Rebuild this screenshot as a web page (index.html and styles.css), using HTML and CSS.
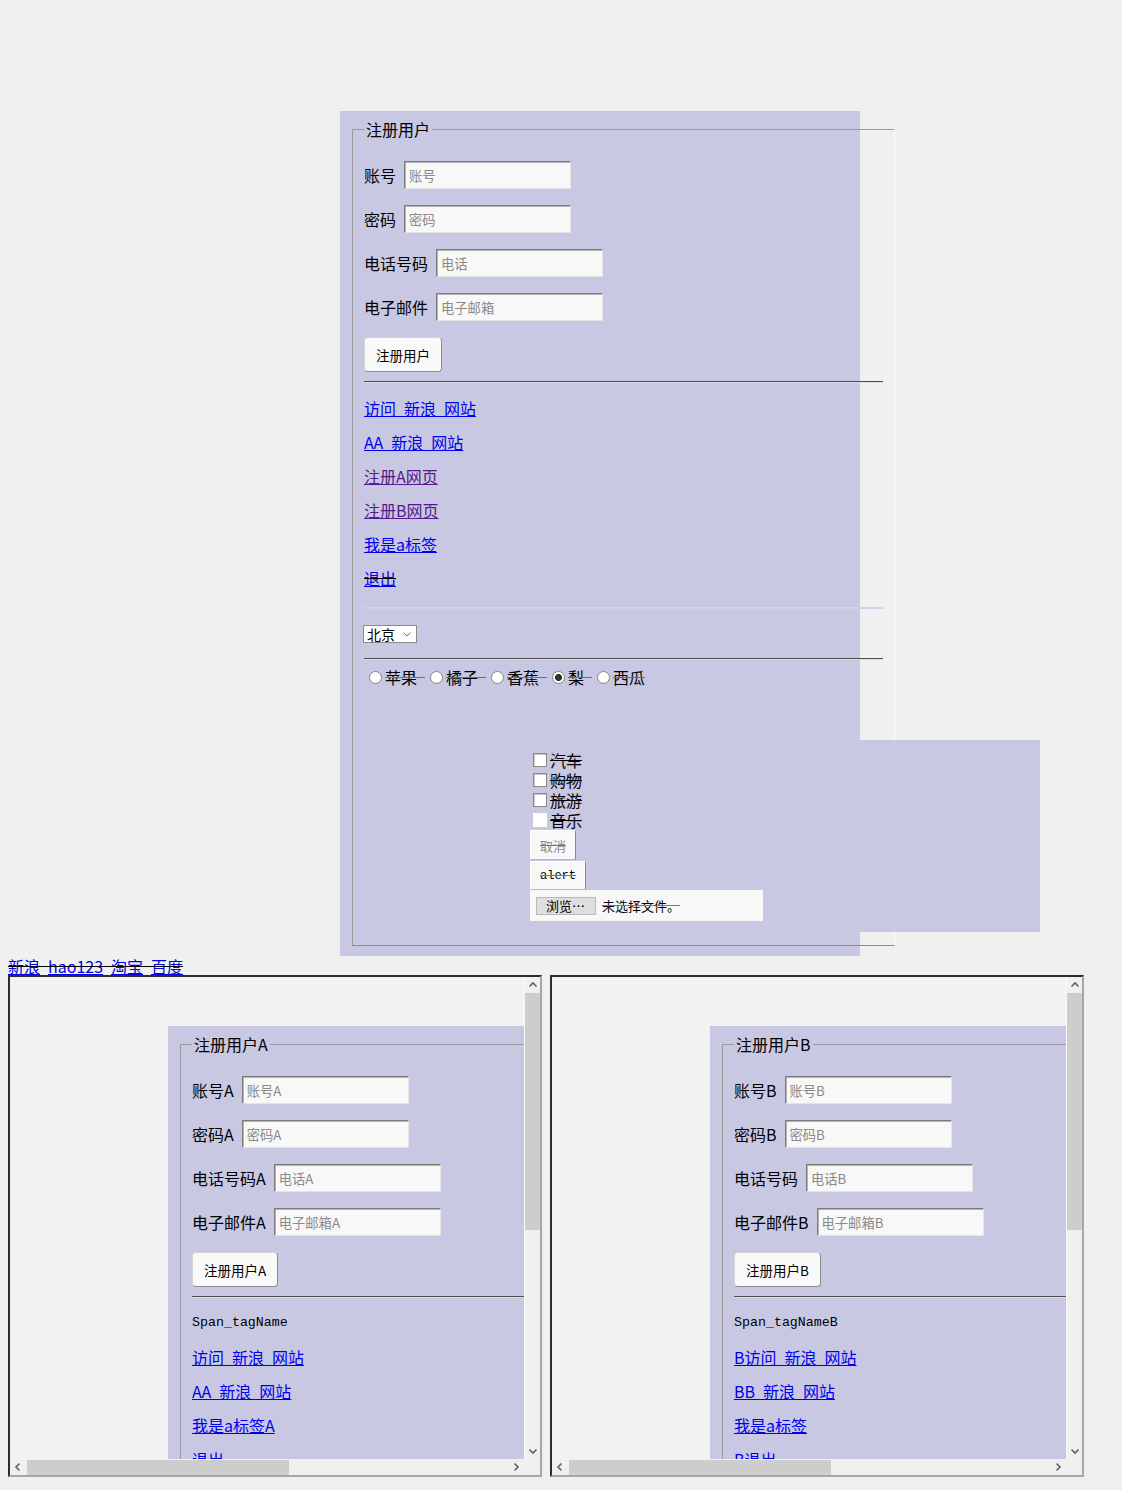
FILE: index.html
```html
<!DOCTYPE html>
<html lang="zh-CN">
<head>
<meta charset="utf-8">
<title>注册用户</title>
<link rel="stylesheet" href="styles.css">
</head>
<body>
<div class="sheet">
  <fieldset class="reg">
    <legend>注册用户</legend>
    <p class="row"><label class="lbl">账号</label><input class="field" placeholder="账号"></p>
    <p class="row"><label class="lbl">密码</label><input class="field" type="password" placeholder="密码"></p>
    <p class="row"><label class="lbl">电话号码</label><input class="field" placeholder="电话"></p>
    <p class="row"><label class="lbl">电子邮件</label><input class="field" placeholder="电子邮箱"></p>
    <div class="btnrow"><button class="submit" type="button">注册用户</button></div>
    <hr class="rule">
    <p class="lnk"><a href="#">访问 新浪 网站</a></p>
    <p class="lnk"><a href="#">AA 新浪 网站</a></p>
    <p class="lnk"><a class="visited" href="#">注册A网页</a></p>
    <p class="lnk"><a class="visited" href="#">注册B网页</a></p>
    <p class="lnk"><a href="#">我是a标签</a></p>
    <p class="lnk"><span class="strike"><a href="#">退出</a></span></p>
    <hr class="rule light">
    <p class="selrow"><span class="select">北京<svg class="chev" viewBox="0 0 8 5"><path d="M0.5 0.5 L4 4 L7.5 0.5"/></svg></span></p>
    <hr class="rule">
    <div class="radios">
      <span class="radio"></span><span class="opt">苹果&nbsp;</span>
      <span class="radio"></span><span class="opt">橘子&nbsp;</span>
      <span class="radio"></span><span class="opt">香蕉&nbsp;</span>
      <span class="radio checked"></span><span class="opt">梨&nbsp;</span>
      <span class="radio"></span><span class="opt">西瓜</span>
    </div>
    <div class="hobbies">
      <div class="cbrow"><span class="cb"></span><span class="hob">汽车</span></div>
      <div class="cbrow"><span class="cb"></span><span class="hob">购物</span></div>
      <div class="cbrow"><span class="cb"></span><span class="hob">旅游</span></div>
      <div class="cbrow"><span class="cb blank"></span><span class="hob">音乐</span></div>
      <button class="flatbtn cancel" type="button">取消</button>
      <button class="flatbtn alert" type="button">alert</button>
      <div class="file"><span class="browse">浏览…</span><span class="nofile">未选择文件。</span></div>
    </div>
  </fieldset>
</div>

<div class="sites"><a href="#">新浪</a> <a href="#">hao123</a> <a href="#">淘宝</a> <a href="#">百度</a></div>

<div class="frames">
  <div class="frame">
    <div class="view">
      <div class="sheet mini">
        <fieldset class="reg">
          <legend>注册用户A</legend>
          <p class="row"><label class="lbl">账号A</label><input class="field" placeholder="账号A"></p>
          <p class="row"><label class="lbl">密码A</label><input class="field" type="password" placeholder="密码A"></p>
          <p class="row"><label class="lbl">电话号码A</label><input class="field" placeholder="电话A"></p>
          <p class="row"><label class="lbl">电子邮件A</label><input class="field" placeholder="电子邮箱A"></p>
          <div class="btnrow"><button class="submit" type="button">注册用户A</button></div>
          <hr class="rule">
          <p class="lnk plain">Span_tagName</p>
          <p class="lnk"><a href="#">访问 新浪 网站</a></p>
          <p class="lnk"><a href="#">AA 新浪 网站</a></p>
          <p class="lnk"><a href="#">我是a标签A</a></p>
          <p class="lnk"><span class="strike"><a href="#">退出</a></span></p>
        </fieldset>
      </div>
    </div>
    <div class="vbar">
      <span class="arrow"><svg viewBox="0 0 16 16"><path d="M4.5 9.5 L8 6 L11.5 9.5"/></svg></span>
      <span class="vtrack"><span class="vthumb"></span></span>
      <span class="arrow"><svg viewBox="0 0 16 16"><path d="M4.5 6.5 L8 10 L11.5 6.5"/></svg></span>
    </div>
    <div class="hbar">
      <span class="arrow"><svg viewBox="0 0 16 16"><path d="M9.5 4.5 L6 8 L9.5 11.5"/></svg></span>
      <span class="htrack"><span class="hthumb"></span></span>
      <span class="arrow"><svg viewBox="0 0 16 16"><path d="M6.5 4.5 L10 8 L6.5 11.5"/></svg></span>
    </div>
    <div class="corner"></div>
  </div>

  <div class="frame">
    <div class="view">
      <div class="sheet mini">
        <fieldset class="reg">
          <legend>注册用户B</legend>
          <p class="row"><label class="lbl">账号B</label><input class="field" placeholder="账号B"></p>
          <p class="row"><label class="lbl">密码B</label><input class="field" type="password" placeholder="密码B"></p>
          <p class="row"><label class="lbl">电话号码</label><input class="field" placeholder="电话B"></p>
          <p class="row"><label class="lbl">电子邮件B</label><input class="field" placeholder="电子邮箱B"></p>
          <div class="btnrow"><button class="submit" type="button">注册用户B</button></div>
          <hr class="rule">
          <p class="lnk plain">Span_tagNameB</p>
          <p class="lnk"><a href="#">B访问 新浪 网站</a></p>
          <p class="lnk"><a href="#">BB 新浪 网站</a></p>
          <p class="lnk"><a href="#">我是a标签</a></p>
          <p class="lnk"><a href="#">B退出</a></p>
        </fieldset>
      </div>
    </div>
    <div class="vbar">
      <span class="arrow"><svg viewBox="0 0 16 16"><path d="M4.5 9.5 L8 6 L11.5 9.5"/></svg></span>
      <span class="vtrack"><span class="vthumb"></span></span>
      <span class="arrow"><svg viewBox="0 0 16 16"><path d="M4.5 6.5 L8 10 L11.5 6.5"/></svg></span>
    </div>
    <div class="hbar">
      <span class="arrow"><svg viewBox="0 0 16 16"><path d="M9.5 4.5 L6 8 L9.5 11.5"/></svg></span>
      <span class="htrack"><span class="hthumb"></span></span>
      <span class="arrow"><svg viewBox="0 0 16 16"><path d="M6.5 4.5 L10 8 L6.5 11.5"/></svg></span>
    </div>
    <div class="corner"></div>
  </div>
</div>
</body>
</html>
```

FILE: styles.css
```css
html, body {
  margin: 0;
}

body {
  padding: 8px;
  background: #f0f0f0;
  color: #000;
  font-family: "Noto Sans CJK SC", "Noto Sans", sans-serif;
  font-size: 16px;
  line-height: 18px;
  word-spacing: 4.4px;
}

/* ---------- purple sheet ---------- */
.sheet {
  margin: 103px 0 0 332px;
  width: 500px;
  height: 825px;
  padding: 10px;
  background: #c8c8e3;
}

.reg {
  margin: 0 2px;
  padding: 8px 11px 13px;
  width: 519px;
  min-width: 0;
  border: 1px solid;
  border-color: #9a9a9a #fdfdfd #8c8c8c #9a9a9a;
}

.reg legend {
  padding: 0 2px;
  font-size: 16px;
  line-height: 16px;
}

.row {
  display: flex;
  align-items: center;
  gap: 8px;
  height: 28px;
  margin: 16px 0;
}

.field {
  width: 167px;
  height: 28px;
  box-sizing: border-box;
  margin: 0;
  padding: 0 4px;
  border: 1px solid;
  border-color: #7c7c7c #e4e4e4 #e4e4e4 #7c7c7c;
  box-shadow: inset 1px 1px 0 #b4b4b4;
  background: #f8f8f8;
  font-family: "Noto Sans CJK SC", sans-serif;
  font-size: 13.3px;
  word-spacing: 0;
}

.field::placeholder {
  color: #8a8a8a;
}

.btnrow {
  height: 36px;
}

.submit {
  height: 35px;
  margin: 0;
  padding: 0 11px;
  border: 1px solid;
  border-color: #d4d4d4 #8e8e8e #8e8e8e #d4d4d4;
  border-radius: 4px;
  background: #f9f9f9;
  color: #000;
  font-family: "Noto Sans CJK SC", sans-serif;
  font-size: 13.5px;
  word-spacing: 0;
}

.rule {
  height: 0;
  margin: 8px 0;
  border: 0;
  border-top: 1px solid #4e4e4e;
  border-bottom: 1px solid #dcdce8;
}

.rule.light {
  margin: 20px 0 15px;
  border-top-color: #d6d6d6;
  border-bottom-color: #cfcfe6;
}

.lnk {
  margin: 16px 0;
  height: 18px;
}

.lnk a {
  color: #0000ee;
  text-decoration: underline;
}

.lnk a.visited {
  color: #551a8b;
}

.strike {
  text-decoration: line-through #000;
}

.plain {
  color: #000;
  font-family: "Liberation Mono", monospace;
  font-size: 13.3px;
  word-spacing: 0;
}

/* ---------- select ---------- */
.selrow {
  margin: 15px 0 16px;
  height: 18px;
}

.select {
  display: inline-flex;
  align-items: center;
  width: 54px;
  height: 18px;
  box-sizing: border-box;
  margin-left: -1px;
  padding-left: 3px;
  border: 1px solid #8a8a8a;
  background: #fff;
  font-size: 14px;
  line-height: 16px;
}

.chev {
  width: 8px;
  height: 5px;
  margin: 0 5px 0 auto;
  fill: none;
  stroke: #707070;
  stroke-width: 1;
}

/* ---------- radios ---------- */
.radios {
  display: flex;
  align-items: center;
  height: 18px;
}

.radio {
  width: 13px;
  height: 13px;
  box-sizing: border-box;
  margin: 0 3px 0 5px;
  border: 1px solid #868686;
  border-radius: 50%;
  background: #fff;
}

.radio.checked {
  background: radial-gradient(circle, #333 0 3.2px, #fff 3.8px);
}

.opt {
  text-decoration: line-through #6e6e6e;
}

/* ---------- hobbies block ---------- */
.hobbies {
  margin: 54px 0 0 166px;
  width: 510px;
  padding: 10px 0 11px;
  background: #c8c8e3;
}

.cbrow {
  display: flex;
  align-items: center;
  height: 20px;
  line-height: 16px;
}

.cb {
  width: 14px;
  height: 14px;
  box-sizing: border-box;
  margin: 0 3px 0 3px;
  border: 1px solid #888;
  box-shadow: inset 1px 1px 0 #c8c8c8;
  background: #fff;
}

.cb.blank {
  border-color: #fff;
  box-shadow: none;
}

.hob {
  text-decoration: line-through #000;
}

.flatbtn {
  display: block;
  margin: 0;
  padding: 0 9px;
  border: 1px solid;
  border-color: #fff #8c8c8c #b8b8b8 #fff;
  background: #f8f8f8;
  text-decoration: line-through #7a7a7a;
}

.cancel {
  height: 30px;
  color: #8c8c8c;
  font-family: "Noto Sans CJK SC", sans-serif;
  font-size: 13px;
}

.alert {
  height: 29px;
  margin-top: 1px;
  color: #000;
  font-family: "Liberation Mono", monospace;
  font-size: 12px;
}

.file {
  display: flex;
  align-items: center;
  gap: 6px;
  width: 233px;
  height: 31px;
  box-sizing: border-box;
  padding-left: 6px;
  background: #f8f8f8;
  font-size: 13px;
  line-height: 16px;
  word-spacing: 0;
}

.browse {
  width: 60px;
  height: 18px;
  box-sizing: border-box;
  padding-left: 9px;
  border: 1px solid #b9b9b9;
  background: #dedede;
  line-height: 16px;
}

.nofile {
  text-decoration: line-through #7a7a7a;
}

/* ---------- site links ---------- */
.sites {
  margin-top: 1px;
  height: 18px;
  text-decoration: line-through #000;
}

.sites a {
  color: #0000ee;
  text-decoration: underline;
}

/* ---------- frames ---------- */
.frames {
  display: flex;
  gap: 8px;
}

.frame {
  width: 534px;
  height: 502px;
  box-sizing: border-box;
  border: 2px solid;
  border-color: #2c2c2c #a6a6a6 #a6a6a6 #2c2c2c;
  display: grid;
  grid-template-columns: 514px 16px;
  grid-template-rows: 482px 16px;
  background: #f2f2f2;
}

.view {
  overflow: hidden;
  padding: 8px;
}

.sheet.mini {
  margin: 41px 0 0 150px;
}

.vbar {
  display: flex;
  flex-direction: column;
  background: #f0f0f0;
  border-left: 1px solid #fafafa;
}

.arrow {
  display: block;
  flex: none;
  width: 16px;
  height: 16px;
}

.vbar .arrow {
  width: 15px;
}

.arrow svg {
  display: block;
  width: 16px;
  height: 16px;
  fill: none;
  stroke: #606060;
  stroke-width: 1.6;
}

.vtrack {
  flex: 1;
}

.vthumb {
  display: block;
  width: 15px;
  height: 237px;
  background: #cdcdcd;
}

.hbar {
  display: flex;
  background: #f0f0f0;
}

.htrack {
  flex: 1;
  padding: 1px 0 0 1px;
}

.hthumb {
  display: block;
  width: 262px;
  height: 15px;
  background: #cdcdcd;
}

.corner {
  background: #f0f0f0;
}
```
